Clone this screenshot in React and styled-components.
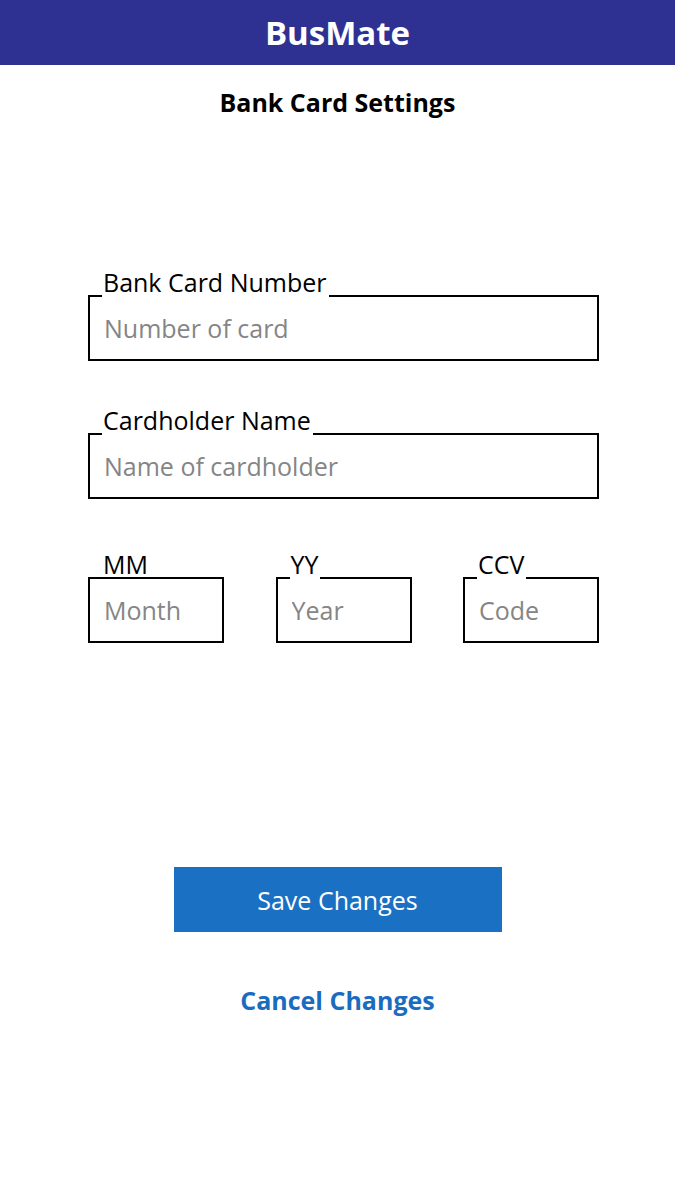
import React from "react";
import styled, { createGlobalStyle } from "styled-components";

const GlobalStyle = createGlobalStyle`
  body {
    margin: 0;
    background: #fff;
    font-family: "Open Sans", "Noto Sans", sans-serif;
  }
  * { box-sizing: border-box; }
`;

const App = () => {
  return (
    <>
      <GlobalStyle />
      <Page>
        <Header>BusMate</Header>
        <Title>Bank Card Settings</Title>
        <Form>
          <Field $top={178}>
            <Label>Bank Card Number</Label>
            <Input placeholder="Number of card" />
          </Field>
          <Field $top={72}>
            <Label>Cardholder Name</Label>
            <Input placeholder="Name of cardholder" />
          </Field>
          <Row>
            <Field $small>
              <Label $plain>MM</Label>
              <Input placeholder="Month" />
            </Field>
            <Field $small>
              <Label>YY</Label>
              <Input placeholder="Year" />
            </Field>
            <Field $small>
              <Label>CCV</Label>
              <Input placeholder="Code" />
            </Field>
          </Row>
        </Form>
        <Actions>
          <SaveButton>Save Changes</SaveButton>
          <CancelButton>Cancel Changes</CancelButton>
        </Actions>
      </Page>
    </>
  );
};

const Page = styled.div`
  width: 675px;
  min-height: 1200px;
  background: #fff;
`;

const Header = styled.div`
  height: 65px;
  background: #2f3192;
  color: #fff;
  font-size: 33px;
  font-weight: 700;
  display: flex;
  align-items: center;
  justify-content: center;
`;

const Title = styled.h1`
  margin: 22px 0 0;
  font-size: 25px;
  line-height: 30px;
  font-weight: 700;
  text-align: center;
  color: #000;
`;

const Form = styled.div`
  padding-left: 88px;
  width: 599px;
`;

const Field = styled.div`
  position: relative;
  margin-top: ${(p) => (p.$top ? `${p.$top}px` : "0")};
  width: ${(p) => (p.$small ? "136px" : "100%")};
  height: 66px;
  border: 2px solid #000;
  display: flex;
  align-items: center;
  padding: 0 14px;
`;

const Label = styled.span`
  position: absolute;
  bottom: 100%;
  left: 12px;
  padding: 0 2px 0 1px;
  font-size: 25px;
  line-height: 30px;
  color: #000;
  background: ${(p) => (p.$plain ? "transparent" : "#fff")};
  white-space: nowrap;
`;

const Input = styled.input`
  border: none;
  outline: none;
  width: 100%;
  padding: 0;
  font-family: inherit;
  font-size: 25px;
  color: #000;
  background: transparent;
  &::placeholder {
    color: #858585;
  }
`;

const Row = styled.div`
  margin-top: 78px;
  display: flex;
  justify-content: space-between;
`;

const Actions = styled.div`
  display: flex;
  flex-direction: column;
  align-items: center;
  margin-top: 224px;
`;

const SaveButton = styled.button`
  width: 328px;
  height: 65px;
  border: none;
  background: #1a70c2;
  color: #fff;
  font-family: inherit;
  font-size: 25px;
`;

const CancelButton = styled.button`
  margin-top: 53px;
  border: none;
  background: none;
  padding: 0;
  color: #1a6cbf;
  font-family: inherit;
  font-size: 25px;
  line-height: 30px;
  font-weight: 700;
`;

export default App;
